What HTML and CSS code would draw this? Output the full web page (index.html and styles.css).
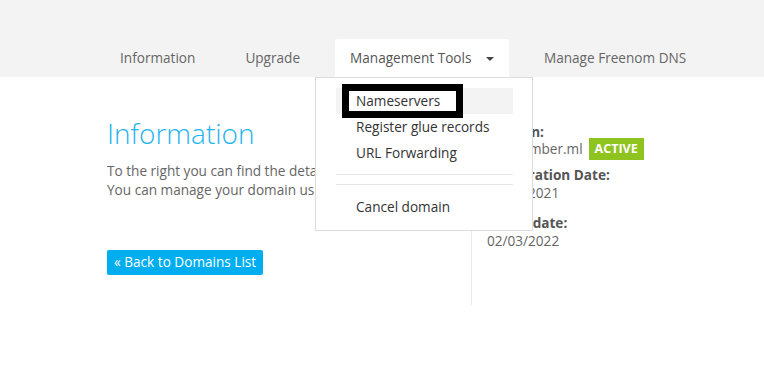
FILE: index.html
```html
<!DOCTYPE html>
<html lang="en">
<head>
    <meta charset="UTF-8">
    <meta name="viewport" content="width=device-width, initial-scale=1.0">
    <title>Domain Information</title>
    <link rel="stylesheet" href="styles.css">
</head>
<body>

    <!-- Tabs -->
    <div class="topbar">
        <ul class="tabs">
            <li class="tab">Information</li>
            <li class="tab">Upgrade</li>
            <li class="tab active">
                Management Tools <span class="caret"></span>
                <div class="dropdown">
                    <div class="drop-item hover"><span class="mark">Nameservers</span></div>
                    <div class="drop-item">Register glue records</div>
                    <div class="drop-item">URL Forwarding</div>
                    <div class="divider"></div>
                    <div class="divider"></div>
                    <div class="drop-item">Cancel domain</div>
                </div>
            </li>
            <li class="tab">Manage Freenom DNS</li>
        </ul>
    </div>

    <!-- Content -->
    <div class="content">
        <div class="left-col">
            <h1>Information</h1>
            <p>To the right you can find the details of your domain.<br>
            You can manage your domain using the tabs above.</p>
            <a class="back-btn" href="#">&laquo; Back to Domains List</a>
        </div>

        <div class="right-col">
            <div class="label">Domain:</div>
            <div class="value status-row"><span>freenomber.ml</span><span class="badge">ACTIVE</span></div>

            <div class="label gap-sm">Registration Date:</div>
            <div class="value">02/03/2021</div>

            <div class="label gap-lg">Expiry date:</div>
            <div class="value">02/03/2022</div>
        </div>
    </div>

</body>
</html>
```

FILE: styles.css
```css
body {
    margin: 0;
    font-family: 'Open Sans', sans-serif;
    font-size: 13.6px;
    color: #666;
    background: #fff;
}

.topbar {
    background: #f3f3f3;
    height: 77px;
}

.tabs {
    list-style: none;
    margin: 0;
    padding: 39px 0 0 105px;
    display: flex;
    gap: 20px;
}

.tab {
    position: relative;
    padding: 0 15px;
    height: 38px;
    line-height: 38px;
    color: #666;
}

.tab.active {
    background: #fff;
    color: #555;
    border-radius: 3px 3px 0 0;
}

.caret {
    display: inline-block;
    width: 0;
    height: 0;
    margin-left: 11px;
    vertical-align: 2px;
    border-left: 4px solid transparent;
    border-right: 4px solid transparent;
    border-top: 4px solid #444;
}

.dropdown {
    position: absolute;
    top: 38px;
    left: -20px;
    width: 177px;
    padding: 10px 19px 10px 20px;
    background: #fff;
    border: 1px solid #ddd;
    line-height: 26px;
    color: #333;
    z-index: 5;
}

.drop-item {
    display: flex;
    align-items: center;
    height: 26px;
    padding-left: 20px;
    white-space: nowrap;
}

.drop-item.hover {
    background: #f3f3f3;
}

.mark {
    margin: -4px 0 -4px -14px;
    padding: 0 16px 0 7px;
    line-height: 20px;
    border: 7px solid #000;
    background: #fff;
}

.divider {
    height: 1px;
    margin: 8px 0 9px;
    background: #e5e5e5;
}

.divider + .divider {
    margin-top: 0;
}

.content {
    display: flex;
    padding: 38px 0 0 107px;
}

.left-col {
    width: 364px;
}

h1 {
    margin: 0;
    font-size: 28px;
    font-weight: 300;
    line-height: 36px;
    color: #1fb4ef;
}

.left-col p {
    margin: 10px 0 51px;
    line-height: 19px;
    color: #666;
}

.back-btn {
    display: inline-block;
    padding: 3px 7px 4px;
    background: #00aeef;
    color: #fff;
    text-decoration: none;
    border-radius: 2px;
    line-height: 18px;
}

.right-col {
    border-left: 1px solid #e8e8e8;
    padding: 8px 0 0 15px;
    height: 182px;
}

.label {
    font-weight: bold;
    color: #555;
    line-height: 18px;
}

.value {
    line-height: 18px;
    color: #666;
}

.status-row {
    display: flex;
    align-items: center;
    height: 18px;
    margin-top: -1px;
}

.badge {
    margin-left: 6px;
    padding: 0 6px;
    height: 22px;
    line-height: 22px;
    background: #8fc31f;
    color: #fff;
    font-size: 12.5px;
    font-weight: bold;
}

.gap-sm {
    margin-top: 8px;
}

.gap-lg {
    margin-top: 12px;
}
```
